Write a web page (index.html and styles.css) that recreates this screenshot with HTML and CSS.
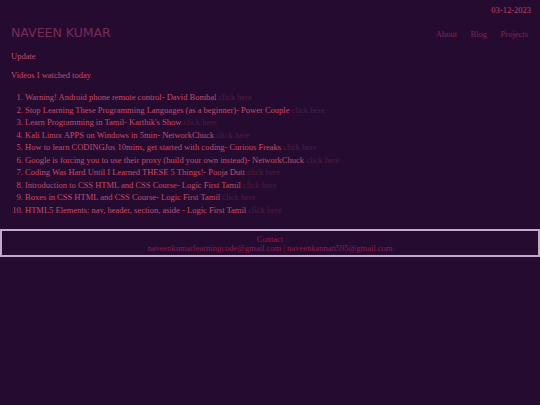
FILE: index.html
```html
<!DOCTYPE html>
<html>
<head>
<meta charset="utf-8">
<link rel="stylesheet" href="styles.css">
</head>
<body>
<div class="date">03-12-2023</div>
<header class="header">
  <h1 class="name">NAVEEN KUMAR</h1>
  <nav class="nav">
    <a href="#">About</a>
    <a href="#">Blog</a>
    <a href="#">Projects</a>
  </nav>
</header>
<main class="main">
  <p class="update">Update</p>
  <p class="heading">Videos I watched today</p>
  <ol class="videos">
    <li>Warning! Android phone remote control- David Bombal <a href="#">click here</a></li>
    <li>Stop Learning These Programming Languages (as a beginner)- Power Couple <a href="#">click here</a></li>
    <li>Learn Programming in Tamil- Karthik's Show <a href="#">click here</a></li>
    <li>Kali Linux APPS on Windows in 5min- NetworkChuck <a href="#">click here</a></li>
    <li>How to learn CODINGJus 10mins, get started with coding- Curious Freaks <a href="#">click here</a></li>
    <li>Google is forcing you to use their proxy (build your own instead)- NetworkChuck <a href="#">click here</a></li>
    <li>Coding Was Hard Until I Learned THESE 5 Things!- Pooja Dutt <a href="#">click here</a></li>
    <li>Introduction to CSS HTML and CSS Course- Logic First Tamil <a href="#">click here</a></li>
    <li>Boxes in CSS HTML and CSS Course- Logic First Tamil <a href="#">click here</a></li>
    <li>HTML5 Elements: nav, header, section, aside - Logic First Tamil <a href="#">click here</a></li>
  </ol>
</main>
<footer class="footer">
  <div class="contact">Contact</div>
  <div class="emails">naveenkumarlearningcode@gmail.com | naveenkannan595@gmail.com</div>
</footer>
</body>
</html>
```
FILE: styles.css
```css
html, body {
  margin: 0;
  padding: 0;
  background: #250b2f;
  height: 100%;
}
body {
  font-family: "Liberation Serif", "Times New Roman", serif;
  font-size: 8.5px;
  color: #c94a6a;
}
a {
  text-decoration: none;
}
.date {
  text-align: right;
  padding: 5px 9px 0 0;
  line-height: 11px;
  color: #c14565;
}
.header {
  display: flex;
  justify-content: space-between;
  align-items: center;
  padding: 0 12px 0 11px;
  margin-top: 9px;
}
.name {
  margin: 0;
  font-family: "DejaVu Sans", Verdana, sans-serif;
  font-weight: normal;
  font-size: 12.5px;
  line-height: 16px;
  color: #7b2a58;
}
.nav {
  display: flex;
  gap: 13.5px;
  padding-top: 1px;
}
.nav a {
  color: #7b2a58;
}
.main {
  padding: 0 11px;
}
.update {
  margin: 9px 0 0 0;
  line-height: 12px;
}
.heading {
  margin: 7px 0 0 0;
  line-height: 12px;
}
.videos {
  margin: 10px 0 0 0;
  padding-left: 14px;
  line-height: 12.55px;
}
.videos a {
  color: #4f1d45;
}
.footer {
  margin-top: 13px;
  border: 2px solid #c3aac9;
  text-align: center;
  color: #8c1d4f;
  padding: 4px 0 2px 0;
  line-height: 9px;
}
```
